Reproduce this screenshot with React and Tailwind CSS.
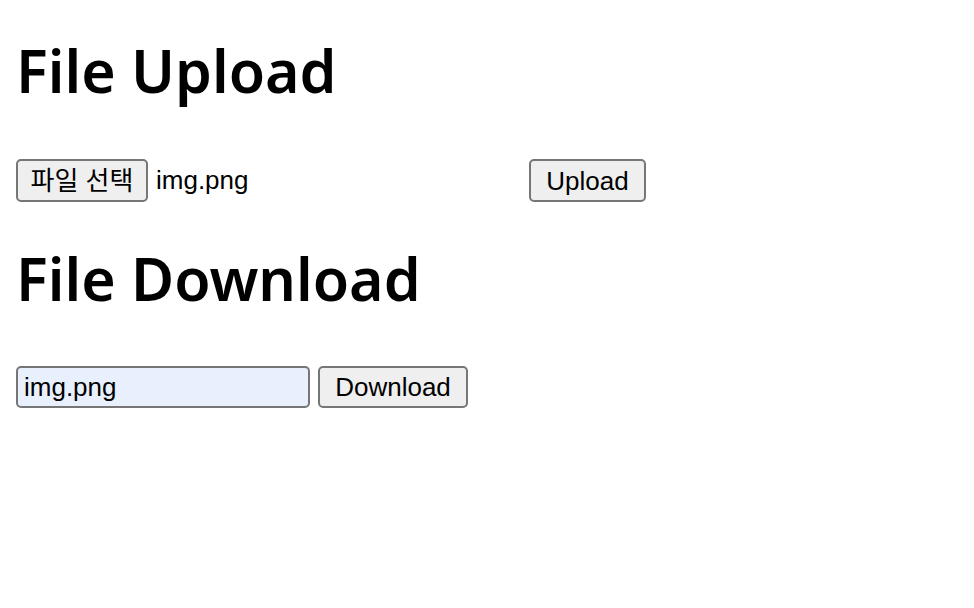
import React, { useState } from 'react';

const App = () => {
  const [fileName] = useState('img.png');
  const [downloadName, setDownloadName] = useState('img.png');

  return (
    <div className="min-h-screen bg-white px-4 pt-[38px]" style={{ fontFamily: '"Liberation Sans", "Noto Sans CJK KR", sans-serif' }}>
      {/* Upload */}
      <h1 className="text-[59px] font-semibold leading-[64px] text-black" style={{ fontFamily: '"Noto Sans", "Noto Sans CJK KR", sans-serif' }}>
        File Upload
      </h1>
      <div className="mt-[57px] flex items-center h-[43px]">
        <div className="w-[506px] flex items-center gap-2">
          <button className="h-[43px] w-[132px] rounded-[5px] border-2 border-[#767676] bg-[#efefef] text-[26px] text-black leading-none" style={{ fontFamily: '"Liberation Sans", "Noto Sans CJK KR", sans-serif' }}>
            파일 선택
          </button>
          <span className="text-[26px] text-black">{fileName}</span>
        </div>
        <button className="ml-[7px] h-[43px] w-[117px] rounded-[5px] border-2 border-[#767676] bg-[#efefef] text-[26px] text-black leading-none">
          Upload
        </button>
      </div>

      {/* Download */}
      <h1 className="mt-[44px] text-[59px] font-semibold leading-[64px] text-black" style={{ fontFamily: '"Noto Sans", "Noto Sans CJK KR", sans-serif' }}>
        File Download
      </h1>
      <div className="mt-[56px] flex items-center gap-2">
        <input
          value={downloadName}
          onChange={(e) => setDownloadName(e.target.value)}
          className="h-[42px] w-[294px] rounded-[5px] border-2 border-[#767676] bg-[#e8f0fe] px-[6px] text-[26px] text-black outline-none"
        />
        <button className="h-[42px] w-[150px] rounded-[5px] border-2 border-[#767676] bg-[#efefef] text-[26px] text-black leading-none">
          Download
        </button>
      </div>
    </div>
  );
};

export default App;
